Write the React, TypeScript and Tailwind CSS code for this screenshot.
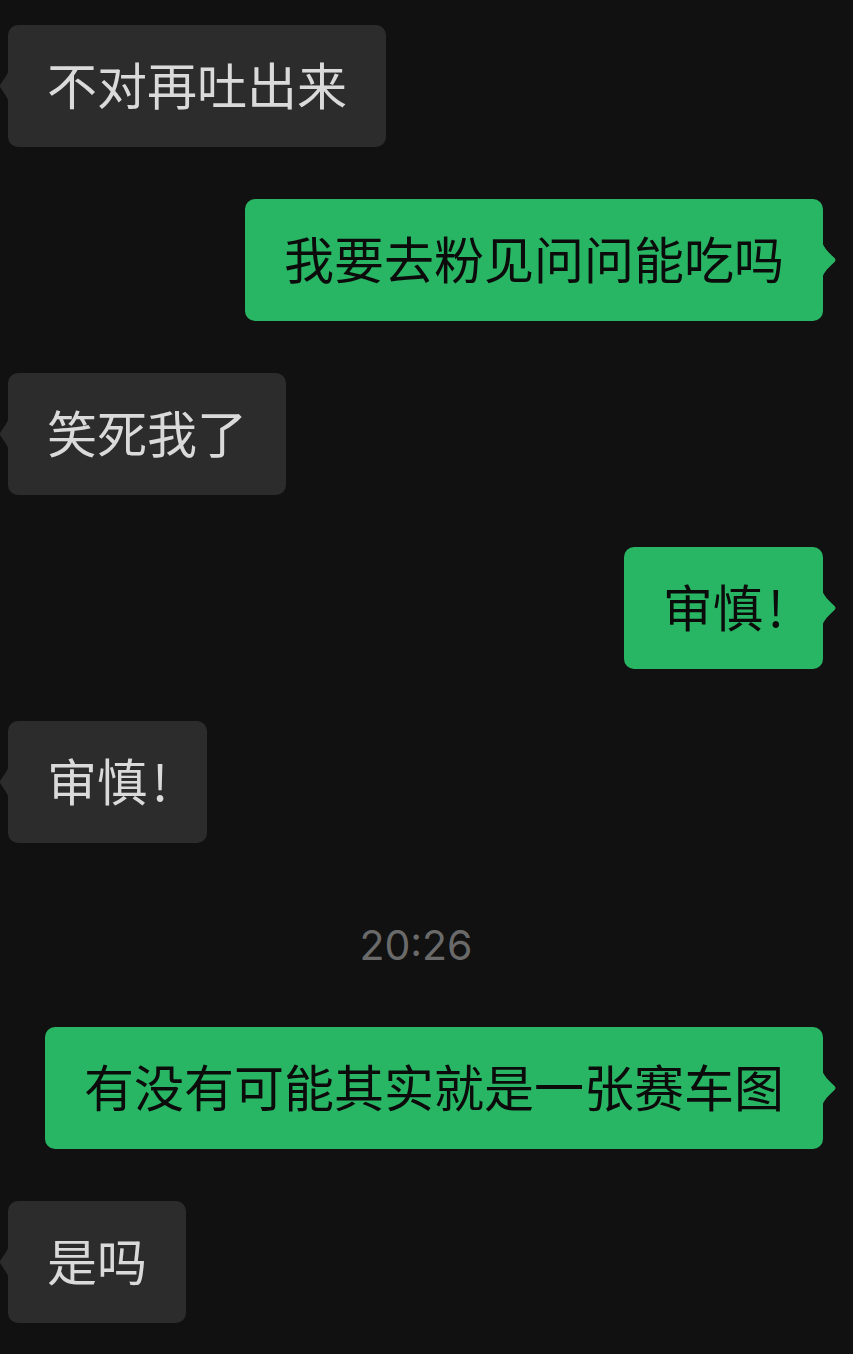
type Msg =
  | { kind: "in"; text: string }
  | { kind: "out"; text: string }
  | { kind: "time"; text: string };

const messages: Msg[] = [
  { kind: "in", text: "不对再吐出来" },
  { kind: "out", text: "我要去粉见问问能吃吗" },
  { kind: "in", text: "笑死我了" },
  { kind: "out", text: "审慎!" },
  { kind: "in", text: "审慎!" },
  { kind: "time", text: "20:26" },
  { kind: "out", text: "有没有可能其实就是一张赛车图" },
  { kind: "in", text: "是吗" },
];

const cjk = "font-['PingFang_SC','Noto_Sans_CJK_SC',sans-serif]";

function Tail({ side }: { side: "left" | "right" }) {
  if (side === "right") {
    return (
      <svg
        className="absolute top-1/2 -right-[15px] -translate-y-1/2 text-[#29b664]"
        width="16"
        height="36"
        viewBox="0 0 16 36"
        aria-hidden="true"
      >
        <path
          d="M0 0C2 6 6 10 12 15.5Q15 18 12 20.5C6 26 2 30 0 36Z"
          fill="currentColor"
        />
      </svg>
    );
  }
  return (
    <svg
      className="absolute top-1/2 -left-[9px] -translate-y-1/2 text-[#2c2c2c]"
      width="10"
      height="32"
      viewBox="0 0 10 32"
      aria-hidden="true"
    >
      <path
        d="M10 0C8 5 5 9 2 13.5Q0 16 2 18.5C5 23 8 27 10 32Z"
        fill="currentColor"
      />
    </svg>
  );
}

function Text({ text }: { text: string }) {
  // the "!" sits a little apart from the characters before it
  if (text.endsWith("!")) {
    return (
      <span className="whitespace-nowrap">
        {text.slice(0, -1)}
        <span className="pl-[5px]">!</span>
      </span>
    );
  }
  return <span className="whitespace-nowrap">{text}</span>;
}

function Bubble({ text, out }: { text: string; out: boolean }) {
  return (
    <div className={out ? "flex justify-end pr-[30px]" : "flex justify-start pl-[8px]"}>
      <div
        className={`relative flex h-[122px] items-center rounded-[10px] px-[39px] pb-[6px] text-[50px] leading-[1.2] ${cjk} ${
          out ? "bg-[#29b664] text-[#0b0b0b]" : "bg-[#2c2c2c] text-[#dadada]"
        }`}
      >
        <Text text={text} />
        <Tail side={out ? "right" : "left"} />
      </div>
    </div>
  );
}

export default function App() {
  return (
    <div className="min-h-[1354px] w-[853px] overflow-hidden bg-[#111111] pt-[25px]">
      <div className="flex flex-col gap-[52px]">
        {messages.map((m, i) =>
          m.kind === "time" ? (
            <div
              key={i}
              className="flex h-[80px] items-center justify-center pt-[22px] pr-[21px] font-['Inter',sans-serif] text-[41px] text-[#6a6a6a]"
            >
              {m.text}
            </div>
          ) : (
            <Bubble key={i} text={m.text} out={m.kind === "out"} />
          )
        )}
      </div>
    </div>
  );
}
